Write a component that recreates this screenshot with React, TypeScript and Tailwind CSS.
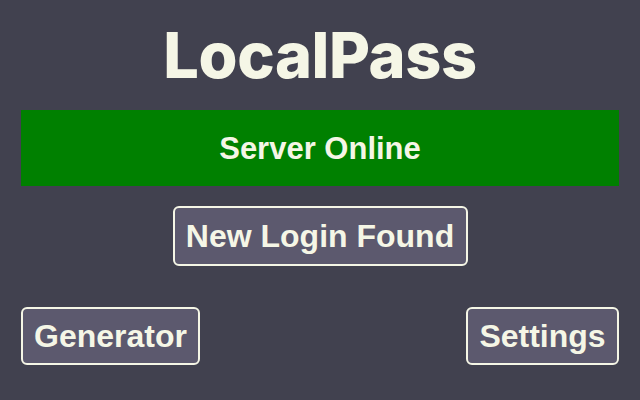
import React from "react";

export default function App() {
  return (
    <div
      className="w-[640px] h-[400px] bg-[#41414f] flex flex-col items-stretch px-[21px] text-[#f5f6e6]"
      style={{ fontFamily: '"Liberation Sans", Arial, sans-serif' }}
    >
      <h1
        className="text-center font-extrabold text-[63px] leading-none mt-[24px] h-[86px] tracking-[-0.4px]"
        style={{ fontFamily: 'Inter, "Liberation Sans", sans-serif' }}
      >
        LocalPass
      </h1>
      <div className="h-[76px] bg-[#008000] flex items-center justify-center font-bold text-[31px] pt-[2px]">
        Server Online
      </div>
      <div className="flex justify-center mt-[20px]">
        <button className="w-[295px] h-[60px] rounded-[6px] border-2 border-[#f5f6e6] bg-[#5c596e] text-[32px] font-bold text-[#f5f6e6]">
          New Login Found
        </button>
      </div>
      <div className="flex justify-between mt-[41px]">
        <button className="w-[179px] h-[58px] rounded-[6px] border-2 border-[#f5f6e6] bg-[#5c596e] text-[32px] font-bold text-[#f5f6e6]">
          Generator
        </button>
        <button className="w-[153px] h-[58px] rounded-[6px] border-2 border-[#f5f6e6] bg-[#5c596e] text-[32px] font-bold text-[#f5f6e6]">
          Settings
        </button>
      </div>
    </div>
  );
}
